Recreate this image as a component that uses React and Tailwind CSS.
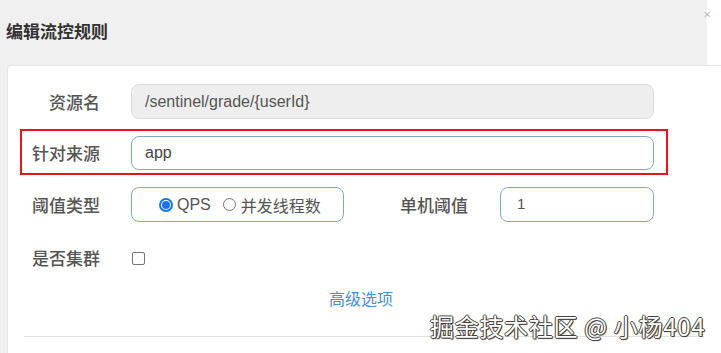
import React from 'react';

const cjk = { fontFamily: '"Noto Sans CJK SC", "Liberation Sans", sans-serif' };
const latin = { fontFamily: '"Liberation Sans", Arial, "Noto Sans CJK SC", sans-serif' };

function Label({ children }) {
  return (
    <div className="w-[78px] shrink-0 text-right text-[17px] font-medium text-[#555]" style={cjk}>
      {children}
    </div>
  );
}

export default function App() {
  return (
    <div className="relative w-full h-[353px] bg-white overflow-hidden">
      <div className="w-[707px] h-full bg-[#f0f0f0] flex flex-col">
        <div className="h-[65px] shrink-0 flex items-start justify-between">
          <div className="pt-[18px] pl-[6px] text-[17px] font-bold text-[#333]" style={cjk}>
            编辑流控规则
          </div>
          <div className="pt-[8px] text-[13px] leading-none text-[#bbb] translate-x-[4px]">×</div>
        </div>

        <div className="flex-1 ml-[7px] w-[714px] bg-white border-l border-t border-[#e6e6e6] rounded-tl-[4px]">
          <div className="w-[648px] ml-[12px] mt-[16px] flex flex-col">
            {/* 资源名 */}
            <div className="flex items-center pr-[12px] border-2 border-transparent">
              <Label>资源名</Label>
              <div
                className="ml-[31px] w-[523px] h-[35px] flex items-center px-[13px] rounded-[8px] bg-[#eeeeee] border border-[#dcdcdc] text-[16px] text-[#555]"
                style={latin}
              >
                /sentinel/grade/{'{userId}'}
              </div>
            </div>

            {/* 针对来源 */}
            <div className="mt-[8px] flex items-center pt-[5px] pb-[3px] pr-[12px] border-2 border-[#e8141b]">
              <Label>针对来源</Label>
              <div
                className="ml-[31px] w-[523px] h-[34px] flex items-center px-[13px] rounded-[8px] bg-white border border-[#7fa8d6] text-[16px] text-[#444]"
                style={latin}
              >
                app
              </div>
            </div>

            {/* 阈值类型 / 单机阈值 */}
            <div className="mt-[10px] flex items-center border-2 border-transparent">
              <Label>阈值类型</Label>
              <div className="ml-[31px] w-[213px] h-[35px] flex items-center pl-[27px] rounded-[8px] border border-[#7fa8d6] text-[16px] text-[#555]">
                <span className="w-[14px] h-[14px] rounded-full border-2 border-[#1a73e8] flex items-center justify-center">
                  <span className="w-[8px] h-[8px] rounded-full bg-[#1a73e8]" />
                </span>
                <span className="ml-[4px]" style={latin}>QPS</span>
                <span className="ml-[12px] w-[13px] h-[13px] rounded-full border border-[#767676]" />
                <span className="ml-[5px]" style={cjk}>并发线程数</span>
              </div>
              <div className="ml-[56px] w-[69px] text-[17px] font-medium text-[#555]" style={cjk}>
                单机阈值
              </div>
              <div
                className="ml-[31px] w-[154px] h-[35px] flex items-center px-[16px] rounded-[8px] border border-[#7fa8d6] text-[15px] text-[#555]"
                style={latin}
              >
                1
              </div>
            </div>

            {/* 是否集群 */}
            <div className="mt-[22px] h-[24px] flex items-center border-2 border-transparent">
              <Label>是否集群</Label>
              <span className="ml-[32px] w-[13px] h-[13px] rounded-[2px] border border-[#767676] bg-white" />
            </div>
          </div>

          <div className="w-[706px] mt-[16px] flex justify-center">
            <span className="text-[16px] text-[#4a8fd0]" style={cjk}>
              高级选项
            </span>
          </div>

          <div className="ml-[16px] mt-[26px] w-[680px] border-t border-[#e2e2e2]" />
        </div>
      </div>

      <div
        className="absolute left-[430px] top-[310px] text-[24px] leading-[32px] text-white tracking-[0.7px]"
        style={{
          ...cjk,
          textShadow:
            '1px 0 0 #444, -1px 0 0 #444, 0 1px 0 #444, 0 -1px 0 #444, 1px 1px 1px #333',
        }}
      >
        掘金技术社区 @ 小杨404
      </div>
    </div>
  );
}
